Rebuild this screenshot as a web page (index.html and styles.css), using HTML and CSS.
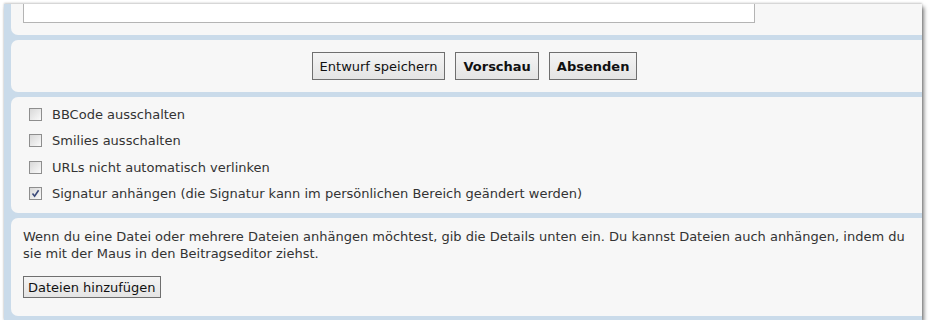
FILE: index.html
```html
<!DOCTYPE html>
<html lang="de">
<head>
  <meta charset="UTF-8"/>
  <title>Beitrag verfassen</title>
  <link rel="stylesheet" href="styles.css">
</head>
<body>
  <div class="postbox">
    <div class="panel panel-text">
      <textarea class="message" rows="4"></textarea>
    </div>

    <div class="panel panel-submit">
      <button type="button" class="btn">Entwurf speichern</button>
      <button type="button" class="btn btn-main">Vorschau</button>
      <button type="button" class="btn btn-main">Absenden</button>
    </div>

    <div class="panel panel-options">
      <label class="option"><span class="box"></span>BBCode ausschalten</label>
      <label class="option"><span class="box"></span>Smilies ausschalten</label>
      <label class="option"><span class="box"></span>URLs nicht automatisch verlinken</label>
      <label class="option">
        <span class="box">
          <svg width="9" height="9" viewBox="0 0 9 9"><path d="M1.5 4.5 L3.6 7.2 L7.6 1.2" fill="none" stroke="#3b4a7a" stroke-width="1.6"/></svg>
        </span>Signatur anhängen (die Signatur kann im persönlichen Bereich geändert werden)
      </label>
    </div>

    <div class="panel panel-attach">
      <p>Wenn du eine Datei oder mehrere Dateien anhängen möchtest, gib die Details unten ein. Du kannst Dateien auch anhängen, indem du sie mit der Maus in den Beitragseditor ziehst.</p>
      <button type="button" class="btn btn-small">Dateien hinzufügen</button>
    </div>
  </div>
</body>
</html>
```

FILE: styles.css
```css
:root {
  --blue:  #cadbea;
  --panel: #f7f7f7;
  --text:  #333333;
}
* {
  box-sizing: border-box;
  margin: 0;
  padding: 0;
}
body {
  background: #ffffff;
  font-family: "DejaVu Sans", Verdana, sans-serif;
  font-size: 13px;
  color: var(--text);
  overflow: hidden;
}
.postbox {
  width: 918px;
  margin: 4px 0 0 4px;
  background: var(--blue);
  padding: 0 0 4px 7px;
  display: flex;
  flex-direction: column;
  gap: 5px;
  box-shadow: 2px 3px 4px rgba(0,0,0,0.5), 0 -1px 2px rgba(0,0,0,0.2);
}
.panel {
  background: var(--panel);
  border-radius: 7px 0 0 7px;
}
.panel-text {
  height: 31px;
  padding-left: 12px;
  overflow: hidden;
  border-top-left-radius: 0;
}
.message {
  display: block;
  width: 732px;
  height: 60px;
  margin-top: -41px;
  background: #ffffff;
  border: 1px solid #b4b4b4;
  resize: none;
}
.panel-submit {
  height: 52px;
  display: flex;
  justify-content: center;
  align-items: center;
  gap: 10px;
  padding-left: 16px;
}
.btn {
  height: 28px;
  padding: 0 7px;
  font-family: inherit;
  font-size: 13px;
  color: #111;
  background: linear-gradient(#f4f4f4, #e4e4e4);
  border: 1px solid #6f6f6f;
  border-radius: 0;
}
.btn-main {
  font-weight: bold;
}
.panel-options {
  padding: 4px 0 6px 18px;
  display: flex;
  flex-direction: column;
}
.option {
  display: flex;
  align-items: center;
  height: 26.5px;
}
.box {
  width: 13px;
  height: 13px;
  margin-right: 10px;
  border: 1px solid #8e8e8e;
  background: linear-gradient(135deg, #d8d8d8, #fafafa);
  display: flex;
  align-items: center;
  justify-content: center;
}
.panel-attach {
  padding: 10px 0 18px 12px;
}
.panel-attach p {
  line-height: 17px;
  margin-bottom: 14px;
}
.btn-small {
  height: 22px;
  padding: 0 4px;
  font-weight: normal;
}
```
